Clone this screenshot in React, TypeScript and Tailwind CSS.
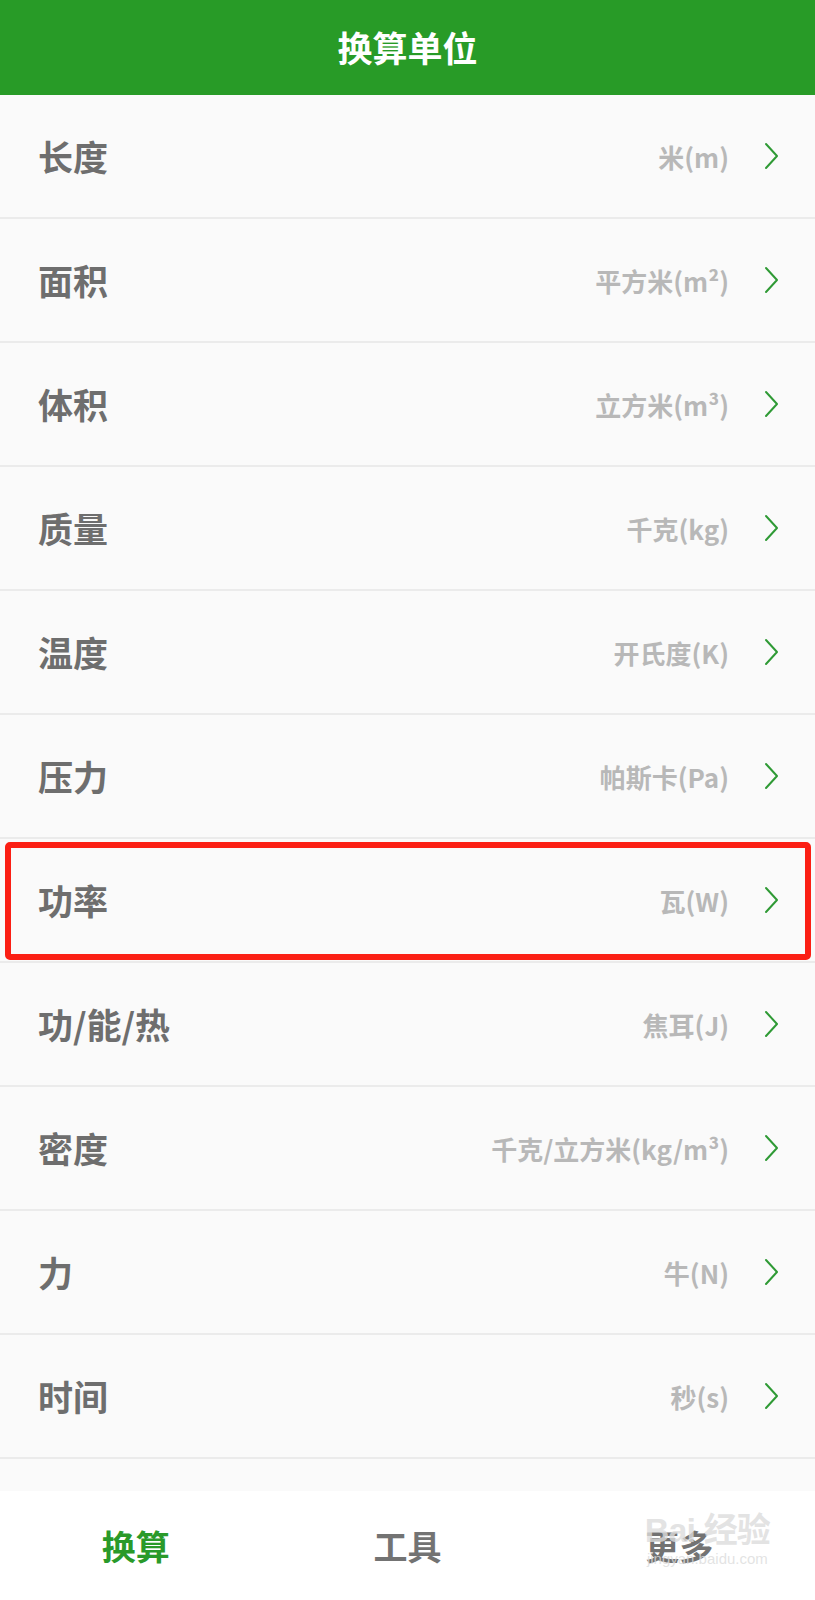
import { FC } from "react";

interface Unit {
    label: string;
    unit: string;
}

const units: Unit[] = [
    { label: "长度", unit: "米(m)" },
    { label: "面积", unit: "平方米(m²)" },
    { label: "体积", unit: "立方米(m³)" },
    { label: "质量", unit: "千克(kg)" },
    { label: "温度", unit: "开氏度(K)" },
    { label: "压力", unit: "帕斯卡(Pa)" },
    { label: "功率", unit: "瓦(W)" },
    { label: "功/能/热", unit: "焦耳(J)" },
    { label: "密度", unit: "千克/立方米(kg/m³)" },
    { label: "力", unit: "牛(N)" },
    { label: "时间", unit: "秒(s)" },
];

const Chevron: FC = () => (
    <svg width="16" height="28" viewBox="0 0 16 28" fill="none" className="shrink-0">
        <polyline points="3,2 14,14 3,26" stroke="#2f9a35" strokeWidth="2" strokeLinecap="round" strokeLinejoin="round" />
    </svg>
);

const UnitRow: FC<Unit & { marked?: boolean }> = ({ label, unit, marked }) => (
    <div className="relative flex h-[124px] shrink-0 items-center justify-between border-b-2 border-[#ebebeb] bg-[#fafafa] pl-[38px] pr-[36px]">
        <span className="text-[35px] font-bold text-[#6e6e6e]">{label}</span>
        <div className="flex items-center gap-[34px]">
            <span className="text-[26px] font-bold text-[#b8b8b8]">{unit}</span>
            <Chevron />
        </div>
        {marked && (
            <div className="absolute left-[5px] right-[4px] top-[3px] bottom-[1px] rounded-[5px] border-[6px] border-[#fb1f14]"></div>
        )}
    </div>
);

const App: FC = () => {
    return (
        <div
            className="flex h-[1600px] w-[815px] flex-col overflow-hidden bg-[#fafafa]"
            style={{ fontFamily: '"Noto Sans CJK SC", "Noto Sans", sans-serif' }}
        >
            <div className="flex h-[95px] shrink-0 items-center justify-center bg-[#289b27]">
                <span className="text-[35px] font-bold text-white">换算单位</span>
            </div>
            <div className="flex flex-1 flex-col overflow-hidden">
                {units.map((u) => (
                    <UnitRow key={u.label} label={u.label} unit={u.unit} marked={u.label === "功率"} />
                ))}
                <div className="h-[124px] shrink-0 bg-[#fafafa]"></div>
            </div>
            <div className="relative grid h-[109px] shrink-0 grid-cols-3 items-center bg-white">
                <span className="text-center text-[34px] font-bold text-[#2a9a2a]">换算</span>
                <span className="text-center text-[34px] font-bold text-[#737373]">工具</span>
                <span className="text-center text-[34px] font-bold text-[#737373]">更多</span>
                <div className="pointer-events-none absolute right-[45px] top-[22px] flex flex-col items-center leading-none text-[#dcdcdc]/80">
                    <span className="text-[34px] font-bold tracking-tight" style={{ fontFamily: '"Liberation Sans", "Noto Sans CJK SC", sans-serif' }}>Bai 经验</span>
                    <span className="mt-[4px] text-[15px]" style={{ fontFamily: '"Liberation Sans", sans-serif' }}>jingyan.baidu.com</span>
                </div>
            </div>
        </div>
    );
};

export default App;
